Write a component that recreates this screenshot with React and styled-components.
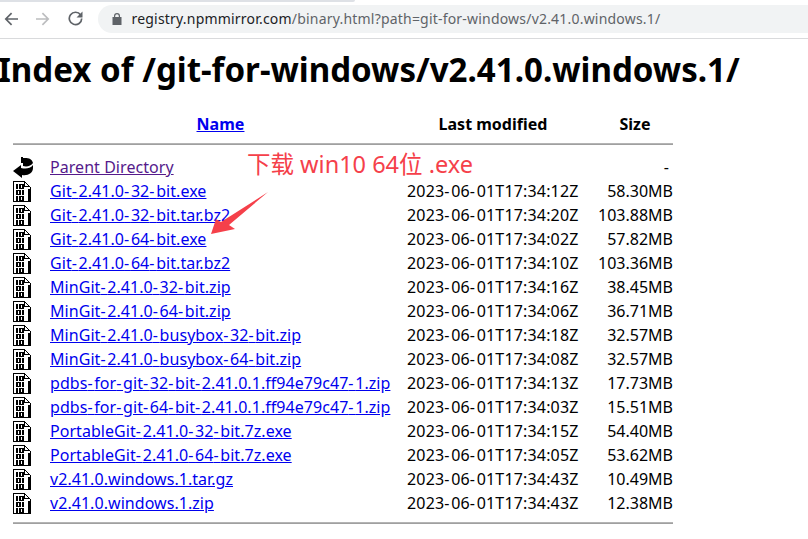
import React from 'react';
import styled, { createGlobalStyle } from 'styled-components';

const font = '"Noto Sans", "Noto Sans CJK SC", sans-serif';

const Global = createGlobalStyle`
  html, body { margin: 0; padding: 0; background: #fff; overflow: hidden; }
  body { width: 808px; height: 539px; font-family: ${font}; color: #000; }
`;
const Page = styled.div`position: relative; width: 808px; height: 539px; overflow: hidden;`;
const TabEdge = styled.div`height: 2px; width: 355px; background: #dee1e6; border-radius: 0 0 4px 0;`;
const Toolbar = styled.div`
  height: 37px; box-sizing: border-box; border-bottom: 1px solid #d9dadc;
  display: flex; align-items: center; gap: 11.5px; padding: 0 0 3px 0;
`;
const NavButton = styled.span`
  width: 21px; height: 24px; display: flex; align-items: center; justify-content: center;
  color: ${p => p.$color};
`;
const Omnibox = styled.div`
  flex: 1; height: 28px; background: #f1f3f4;
  border-radius: 14px 0 0 14px; display: flex; align-items: center; padding-left: 14px;
  font-size: 14px; color: #202124; gap: 10px; letter-spacing: 0.2px;
`;
const Path = styled.span`color: #5f6368;`;
const Heading = styled.h1`
  margin: 11px 0 0 -2px; font-size: 33.1px; line-height: 40px; font-weight: 700; white-space: nowrap;
`;
const Listing = styled.table`
  margin: 21px 0 0 13px; border-collapse: collapse; width: 660px; table-layout: fixed;
  font-size: 16px; white-space: nowrap;
`;
const HeadCell = styled.th`
  height: 26px; padding: 0 ${p => p.$pad || 0}px 0 0; font-weight: 700; text-align: center;
  font-size: 16px; line-height: 24px;
`;
const Row = styled.tr`height: 24px;`;
const IconCell = styled.td`padding: 0; width: 37px; height: 24px; vertical-align: middle;`;
const Cell = styled.td`padding: 0; line-height: 24px;`;
const DateCell = styled(Cell)`letter-spacing: 0.17px;`;
const SizeCell = styled(Cell)`text-align: right;`;
const RuleCell = styled.td`padding: ${p => p.$top}px 0 0; height: ${p => p.$h}px; box-sizing: border-box; vertical-align: top;`;
const Rule = styled.div`height: 2px; box-sizing: border-box; background: #a0a0a0; border-top: 1px solid #b4b4b4;`;
const FileLink = styled.a`
  color: ${p => p.$visited ? '#551a8b' : '#0000ee'}; text-decoration: underline; letter-spacing: 0.05px;
`;
const Hyphen = styled.span`letter-spacing: 1.7px;`;
const Note = styled.div`
  position: absolute; left: 247px; top: 149px; font-size: 23.5px; line-height: 30px;
  color: #f5404a; white-space: nowrap;
`;
const Arrow = styled.svg`position: absolute; left: 205px; top: 188px;`;
const IconSvg = styled.svg`display: block;`;

const BinaryIcon = () => (
  <IconSvg width="18" height="21" viewBox="0 0 18 21" shapeRendering="crispEdges">
    <path d="M0.5 0.5H11.5L17 6V20.5H0.5Z" fill="#fff" stroke="#000" />
    <path d="M11.5 1V5.5H17" fill="none" stroke="#000" />
    <path
      fill="#000" fillRule="evenodd"
      d="M3 3h2v5H3zM6 3h5v5H6zM8 4v3h1V4zM3 9h5v5H3zM5 10v3h1v-3zM9 9h2v5H9zM3 15h2v5H3zM6 15h5v5H6zM8 16v3h1v-3z"
    />
    <path fill="#000" d="M15 8h2v13h-2zM1 20h16v1H1z" />
  </IconSvg>
);
const ParentIcon = () => (
  <IconSvg width="21" height="23" viewBox="0 0 21 23">
    <path fill="#000" d="M0 15 8 9V12C12 13 17 13 20 9V12C20 17 15 20 9 19V22Z" />
    <path fill="#000" d="M8 1h2v1h2c4 0 7 1 8 5-2 3-6 4-10 3V7H8Z" />
  </IconSvg>
);
const Hyphenated = ({ children }) => children.split('-').flatMap((part, i) =>
  i === 0 ? [part] : [<Hyphen key={i}>-</Hyphen>, part]
);

const files = [
  ['Git-2.41.0-32-bit.exe', '2023-06-01T17:34:12Z', '58.30MB'],
  ['Git-2.41.0-32-bit.tar.bz2', '2023-06-01T17:34:20Z', '103.88MB'],
  ['Git-2.41.0-64-bit.exe', '2023-06-01T17:34:02Z', '57.82MB'],
  ['Git-2.41.0-64-bit.tar.bz2', '2023-06-01T17:34:10Z', '103.36MB'],
  ['MinGit-2.41.0-32-bit.zip', '2023-06-01T17:34:16Z', '38.45MB'],
  ['MinGit-2.41.0-64-bit.zip', '2023-06-01T17:34:06Z', '36.71MB'],
  ['MinGit-2.41.0-busybox-32-bit.zip', '2023-06-01T17:34:18Z', '32.57MB'],
  ['MinGit-2.41.0-busybox-64-bit.zip', '2023-06-01T17:34:08Z', '32.57MB'],
  ['pdbs-for-git-32-bit-2.41.0.1.ff94e79c47-1.zip', '2023-06-01T17:34:13Z', '17.73MB'],
  ['pdbs-for-git-64-bit-2.41.0.1.ff94e79c47-1.zip', '2023-06-01T17:34:03Z', '15.51MB'],
  ['PortableGit-2.41.0-32-bit.7z.exe', '2023-06-01T17:34:15Z', '54.40MB'],
  ['PortableGit-2.41.0-64-bit.7z.exe', '2023-06-01T17:34:05Z', '53.62MB'],
  ['v2.41.0.windows.1.tar.gz', '2023-06-01T17:34:43Z', '10.49MB'],
  ['v2.41.0.windows.1.zip', '2023-06-01T17:34:43Z', '12.38MB'],
];

export default function App() {
  return (
    <Page>
      <Global />
      <TabEdge />
      <Toolbar>
        <NavButton $color="#5f6368">
          <svg width="14" height="14" viewBox="0 0 14 14"><path d="M14 7H2M7.6 1.2 1.8 7l5.8 5.8" fill="none" stroke="currentColor" strokeWidth="1.7" /></svg>
        </NavButton>
        <NavButton $color="#bcbdbf">
          <svg width="14" height="14" viewBox="0 0 14 14"><path d="M0 7h12M6.4 1.2 12.2 7l-5.8 5.8" fill="none" stroke="currentColor" strokeWidth="1.7" /></svg>
        </NavButton>
        <NavButton $color="#5f6368">
          <svg width="15" height="15" viewBox="0 0 15 15"><path d="M12.6 3.9A6.2 6.2 0 1 0 13.7 7.5" fill="none" stroke="currentColor" strokeWidth="1.7" /><path d="M14.5 0.5v6h-6z" fill="currentColor" /></svg>
        </NavButton>
        <Omnibox>
          <svg width="10" height="12" viewBox="0 0 10 12"><path fill="#5f6368" fillRule="evenodd" d="M2 4V3a3 3 0 0 1 6 0v1h1.5v8H.5V4zM3.2 4h3.6V3a1.8 1.8 0 0 0-3.6 0z" /></svg>
          <span>registry.npmmirror.com<Path>/binary.html?path=git-for-windows/v2.41.0.windows.1/</Path></span>
        </Omnibox>
      </Toolbar>
      <Heading>Index of /git-for-windows/v2.41.0.windows.1/</Heading>
      <Listing>
        <colgroup>
          <col width="37" /><col width="357" /><col width="190" /><col width="76" />
        </colgroup>
        <thead>
          <tr>
            <HeadCell />
            <HeadCell $pad={16}><FileLink href="#">Name</FileLink></HeadCell>
            <HeadCell $pad={18}>Last modified</HeadCell>
            <HeadCell>Size</HeadCell>
          </tr>
          <tr><RuleCell colSpan={4} $h={18} $top={6}><Rule /></RuleCell></tr>
        </thead>
        <tbody>
          <Row>
            <IconCell><ParentIcon /></IconCell>
            <Cell><FileLink href="#" $visited>Parent Directory</FileLink></Cell>
            <Cell />
            <SizeCell>-&nbsp;</SizeCell>
          </Row>
          {files.map(([name, date, size]) => (
            <Row key={name}>
              <IconCell><BinaryIcon /></IconCell>
              <Cell><FileLink href="#"><Hyphenated>{name}</Hyphenated></FileLink></Cell>
              <DateCell><Hyphenated>{date}</Hyphenated></DateCell>
              <SizeCell>{size}</SizeCell>
            </Row>
          ))}
          <tr><RuleCell colSpan={4} $h={20} $top={7}><Rule /></RuleCell></tr>
        </tbody>
      </Listing>
      <Note>下载 win10 64位 .exe</Note>
      <Arrow width="66" height="50" viewBox="0 0 66 50">
        <path fill="#f5404a" d="M63 4 24 37 30 41 6 46 11 31 16 34Z" />
      </Arrow>
    </Page>
  );
}
